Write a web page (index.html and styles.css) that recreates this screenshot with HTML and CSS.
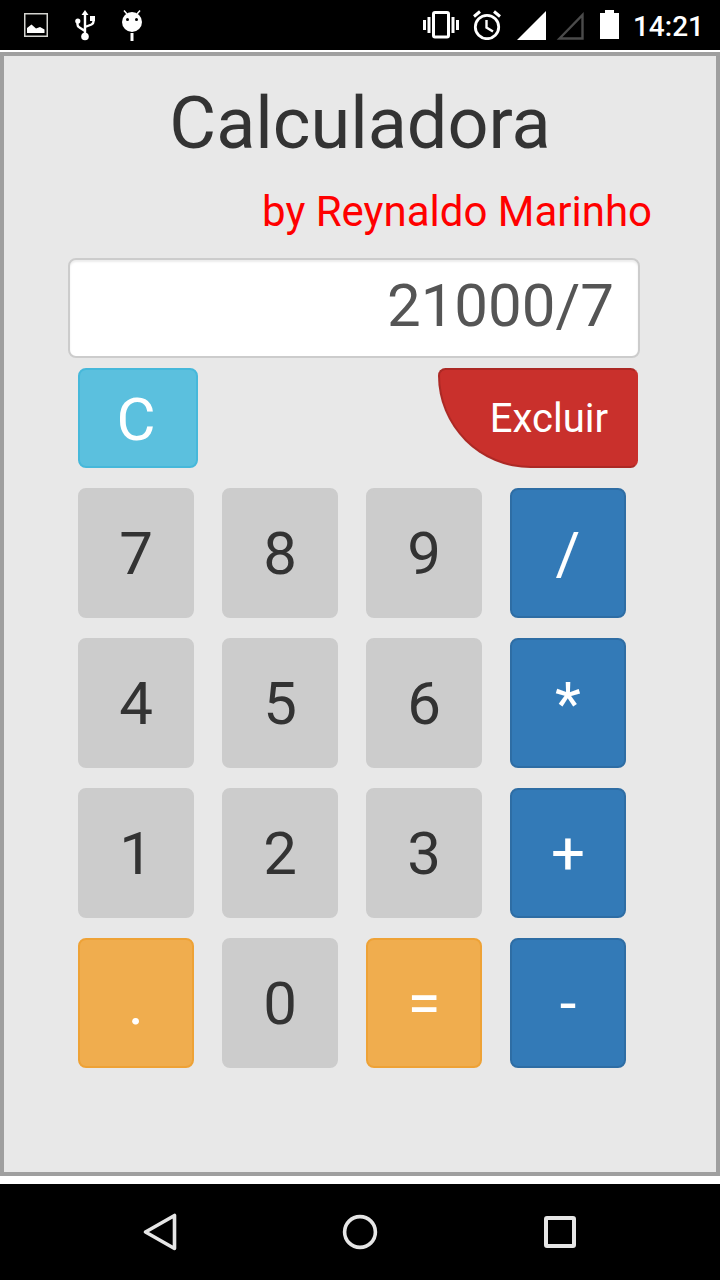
FILE: index.html
```html
<!DOCTYPE html>
<html lang="pt-BR">
<head>
<meta charset="utf-8">
<meta name="viewport" content="width=device-width, initial-scale=1">
<title>Calculadora</title>
<link rel="stylesheet" href="styles.css">
</head>
<body>
<header class="status-bar">
  <div class="status-group notices">
    <svg width="24" height="24" viewBox="0 0 24 24" aria-hidden="true"><rect x=".75" y=".75" width="22.5" height="22.5" fill="none" stroke="#d4d4d0" stroke-width="1.5"/><path d="M3 20v-5l4.500-3.500 4.500 4 4-1.500 4.500 2.500v3.500z" fill="#fff"/></svg>
    <svg width="21" height="32" viewBox="-1 0 21 32" aria-hidden="true"><path d="M10 27V5M10 22l-5.500-3.500q-2-1-2-3V14M10 18l6.500-2.500q2-1 2-3V11" fill="none" stroke="#fff" stroke-width="2.400"/><path d="M10 1l3.500 5h-7zM15 7h5v5H15z" fill="#fff"/><circle cx="2.800" cy="12" r="2.600" fill="#fff"/><circle cx="10" cy="27.500" r="3.800" fill="#fff"/></svg>
    <svg width="22" height="32" viewBox="0 0 22 32" aria-hidden="true"><circle cx="11" cy="13" r="10" fill="#fff"/><path d="M6 5L3 1.500M16 5l3-3.500" stroke="#fff" stroke-width="1.500"/><path d="M11 24v8" stroke="#fff" stroke-width="3"/><circle cx="6.500" cy="10.500" r="1.500"/><circle cx="15.500" cy="10.500" r="1.500"/></svg>
  </div>
  <div class="status-group">
    <svg width="36" height="28" viewBox="0 0 36 28" aria-hidden="true"><rect x="10.500" y="1.500" width="15" height="24.500" rx="1.500" fill="none" stroke="#fff" stroke-width="3"/><path d="M1.500 9v10M34.500 9v10M6 6v16M30 6v16" stroke="#fff" stroke-width="3"/></svg>
    <svg class="alarm" width="28" height="30" viewBox="0 0 28 30" aria-hidden="true"><circle cx="14" cy="17" r="11.700" fill="none" stroke="#fff" stroke-width="2.800"/><path d="M1 6.500l6-5M27 6.500l-6-5" stroke="#fff" stroke-width="3"/><path d="M13.500 10v7.500l6.500 4" fill="none" stroke="#fff" stroke-width="2.400"/></svg>
    <svg class="signal" width="29" height="29" viewBox="0 0 29 29" aria-hidden="true"><path d="M0 29L29 0v29z" fill="#fff"/></svg>
    <svg class="signal-off" width="28" height="29" viewBox="0 0 28 29" aria-hidden="true"><path d="M3.500 27.500L26.500 4v23.500z" fill="none" stroke="#4b4b4b" stroke-width="2.400"/></svg>
    <svg class="battery" width="19" height="30" viewBox="0 0 19 30" aria-hidden="true"><path d="M0 3h5V0h9v3h5v26H0z" fill="#fff"/></svg>
    <time>14:21</time>
  </div>
</header>
<main class="calculator">
  <h1>Calculadora</h1>
  <p class="author">by Reynaldo Marinho</p>
  <input class="display" type="text" value="21000/7" aria-label="Visor">
  <div class="actions">
    <button class="clear" type="button">C</button>
    <button class="delete" type="button">Excluir</button>
  </div>
  <div class="keys">
    <button type="button">7</button><button type="button">8</button><button type="button">9</button><button class="operator" type="button">/</button>
    <button type="button">4</button><button type="button">5</button><button type="button">6</button><button class="operator" type="button">*</button>
    <button type="button">1</button><button type="button">2</button><button type="button">3</button><button class="operator" type="button">+</button>
    <button class="accent" type="button">.</button><button type="button">0</button><button class="accent" type="button">=</button><button class="operator" type="button">-</button>
  </div>
</main>
<nav class="system-nav" aria-label="Sistema">
  <button type="button" aria-label="Voltar"><svg width="40" height="40" viewBox="0 0 40 40"><path d="M5.500 20L34.500 3.500v33z" fill="none" stroke="#e6e6e6" stroke-width="3.600" stroke-linejoin="round"/></svg></button>
  <button type="button" aria-label="Início"><svg width="40" height="40" viewBox="0 0 40 40"><circle cx="20" cy="20" r="15.400" fill="none" stroke="#e6e6e6" stroke-width="3.600"/></svg></button>
  <button type="button" aria-label="Recentes"><svg width="40" height="40" viewBox="0 0 40 40"><rect x="6" y="6" width="28" height="28" rx="1" fill="none" stroke="#e6e6e6" stroke-width="4"/></svg></button>
</nav>
</body>
</html>
```
FILE: styles.css
```css
* { box-sizing: border-box; }
body {
  margin: 0;
  min-height: 100vh;
  display: flex;
  flex-direction: column;
  background: #fff;
  color: #333;
  font-family: Roboto, sans-serif;
}
button, input { font: inherit; margin: 0; }
svg { display: block; flex: none; }

.status-bar {
  height: 50px;
  padding: 0 16px 0 24px;
  display: flex;
  justify-content: space-between;
  align-items: center;
  background: #000;
  color: #fff;
}
.status-group { display: flex; align-items: center; }
.notices { gap: 26px; }
.alarm { margin-left: 14px; }
.signal { margin-left: 16px; }
.signal-off { margin-left: 10px; }
.battery { margin-left: 16px; }
.status-bar time {
  margin-left: 14px;
  padding-top: 4px;
  font-size: 28px;
  font-weight: 500;
  line-height: 32px;
}

.calculator {
  flex: 1;
  margin: 2px 0 8px;
  padding: 24px 64px;
  border: 4px solid #9f9f9f;
  background: #e8e8e8;
}
h1 {
  margin: 0;
  font-size: 72px;
  font-weight: 400;
  line-height: 88px;
  text-align: center;
}
.author {
  margin: 20px 0;
  font-size: 42px;
  line-height: 48px;
  text-align: right;
  color: #f00;
}
.display {
  display: block;
  width: calc(100% - 12px);
  height: 100px;
  margin-top: 22px;
  padding: 0 24px 6px;
  border: 2px solid #ccc;
  border-radius: 8px;
  background: #fff;
  box-shadow: inset 0 2px 2px rgba(0, 0, 0, .075);
  color: #555;
  font-size: 60px;
  text-align: right;
}
.actions {
  display: flex;
  justify-content: space-between;
  margin: 10px 14px 20px 10px;
}
.actions button {
  height: 100px;
  border: 2px solid;
  color: #fff;
}
.actions .clear {
  width: 120px;
  padding: 2px 4px 0 0;
  border-color: #46b8da;
  border-radius: 8px;
  background: #5bc0de;
  font-size: 60px;
}
.actions .delete {
  width: 200px;
  padding: 0 28px;
  border-color: #ac2925;
  border-right-color: #c9302c;
  border-radius: 8px 8px 8px 100px;
  background: #c9302c;
  font-size: 40px;
  text-align: right;
}
.keys {
  display: grid;
  grid-template-columns: repeat(4, 1fr);
  gap: 20px 28px;
  margin: 0 26px 0 10px;
}
.keys button {
  height: 130px;
  padding: 0;
  border: 2px solid #ccc;
  border-radius: 8px;
  background: #ccc;
  color: #333;
  font-size: 60px;
}
.keys .operator {
  border-color: #2e6da4;
  background: #337ab7;
  color: #fff;
}
.keys .accent {
  border-color: #eea236;
  background: #f0ad4e;
  color: #fff;
}

.system-nav {
  height: 96px;
  display: flex;
  justify-content: center;
  align-items: center;
  gap: 160px;
  background: #000;
}
.system-nav button {
  padding: 0;
  border: 0;
  background: none;
}
```
